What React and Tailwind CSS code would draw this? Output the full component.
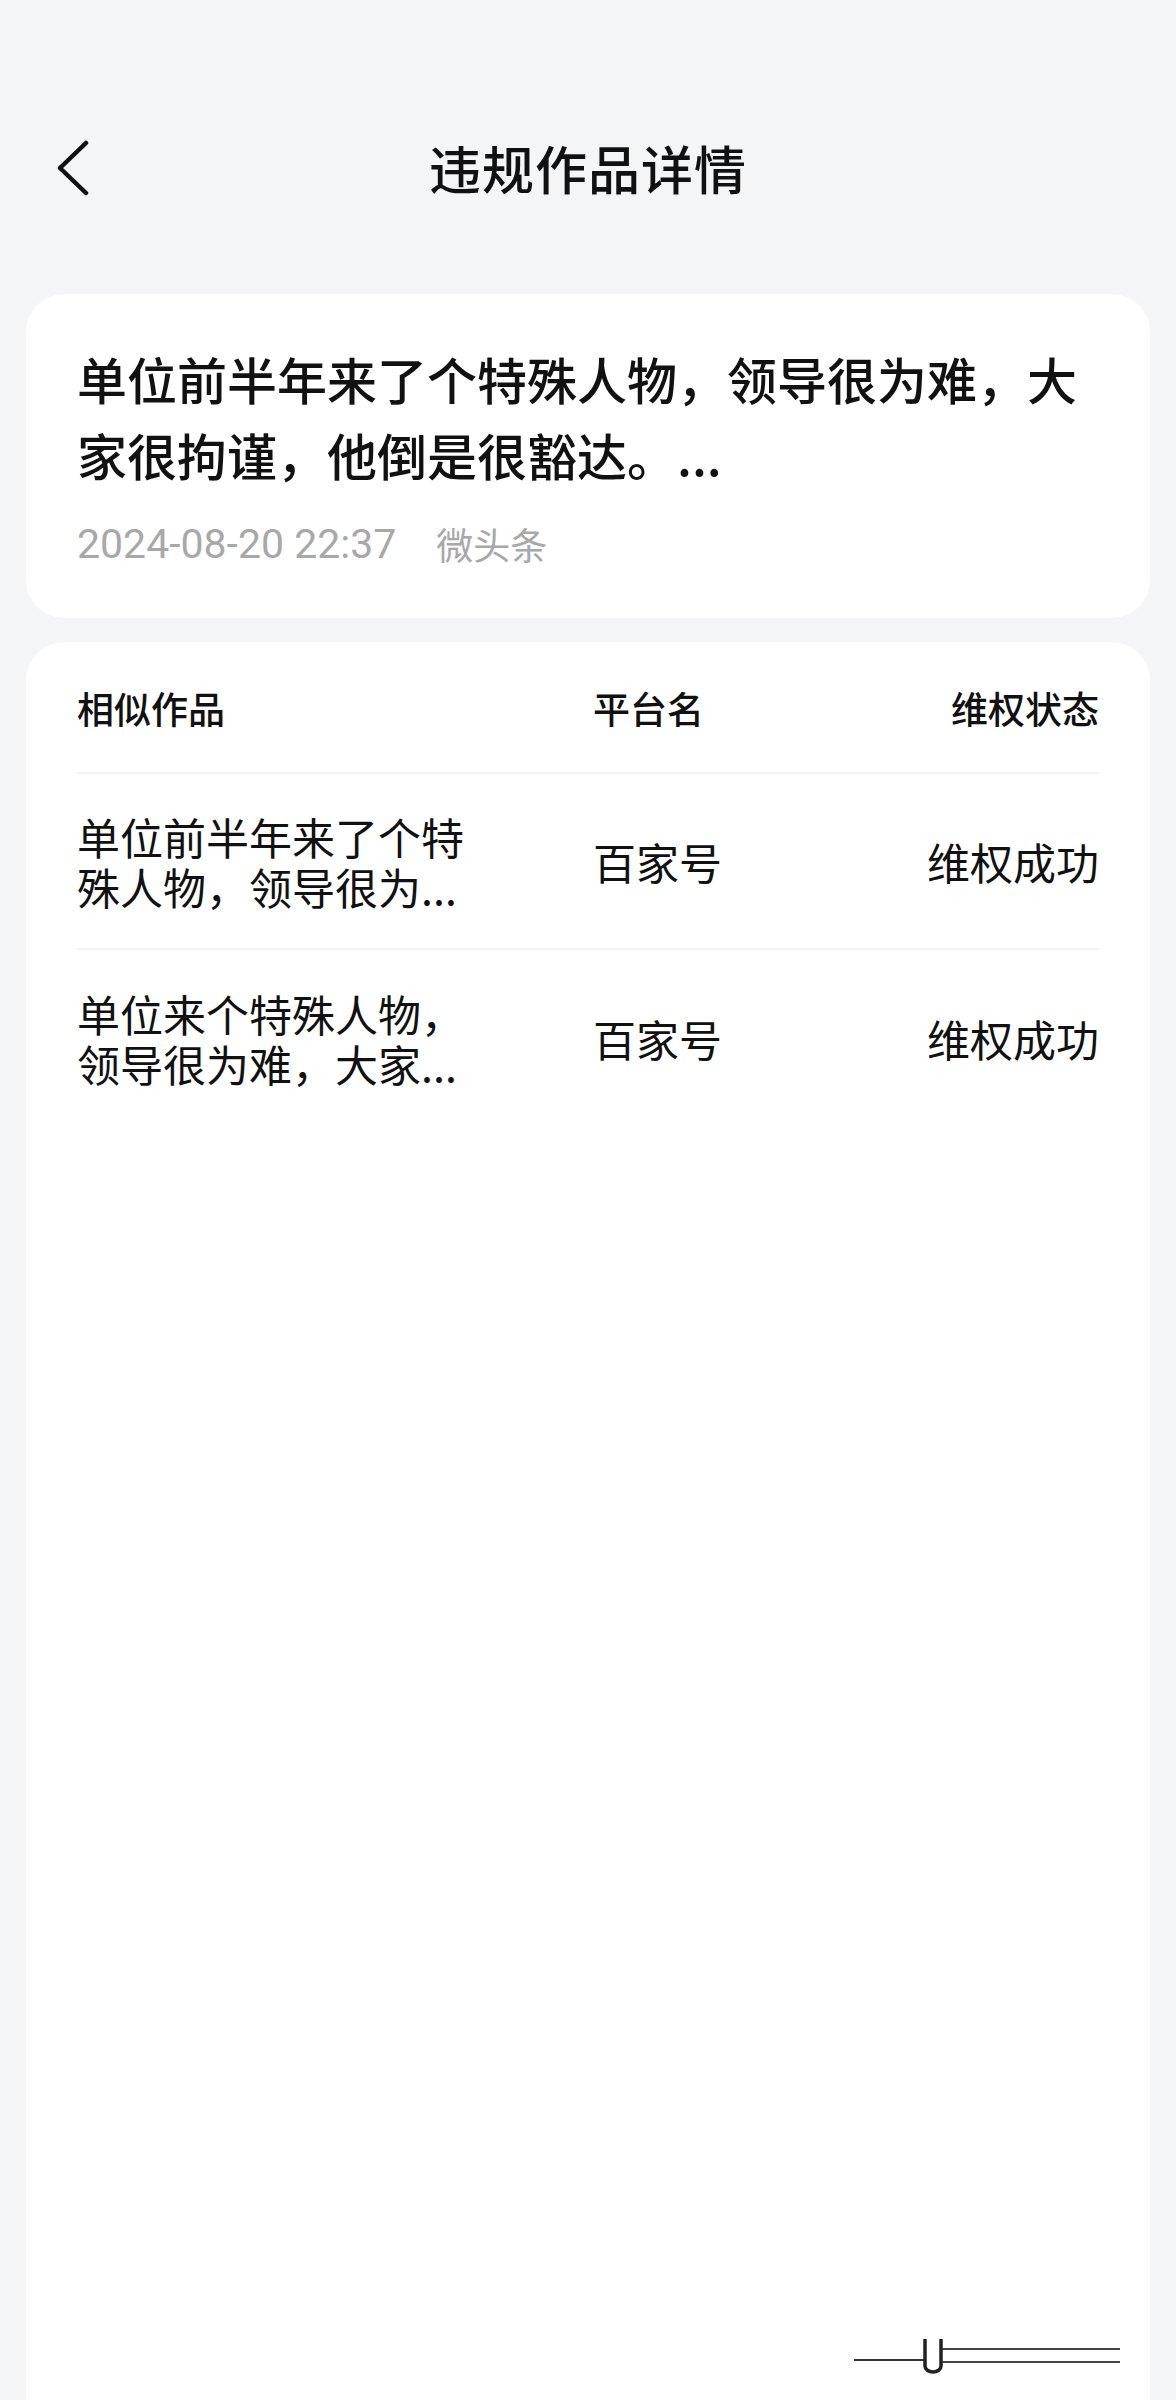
import React from 'react'

const FONT = { fontFamily: '"Noto Sans CJK SC", "Noto Sans", sans-serif' }

const ROWS = [
  { title: '单位前半年来了个特殊人物，领导很为...', platform: '百家号', status: '维权成功' },
  { title: '单位来个特殊人物，领导很为难，大家...', platform: '百家号', status: '维权成功' },
]

function BackIcon() {
  return (
    <svg width="34" height="56" viewBox="0 0 34 56" fill="none">
      <polyline points="30,3 4,28 30,53" stroke="#111" strokeWidth="4.5" strokeLinecap="round" strokeLinejoin="round" />
    </svg>
  )
}

function Watermark() {
  return (
    <svg className="absolute right-[26px] bottom-[24px]" width="272" height="40" viewBox="0 0 272 40" fill="none">
      <line x1="2" y1="24" x2="72" y2="24" stroke="#333" strokeWidth="2" />
      <line x1="90" y1="13" x2="268" y2="13" stroke="#444" strokeWidth="2" />
      <line x1="90" y1="26" x2="268" y2="26" stroke="#444" strokeWidth="2" />
      <path d="M73 3 V30 a8 6 0 0 0 16 0 V3" stroke="#222" strokeWidth="3.5" />
    </svg>
  )
}

export default function App() {
  return (
    <div className="h-[2400px] overflow-hidden bg-[#f4f5f7] flex flex-col text-[#111]" style={FONT}>
      <div className="pt-[130px] grid grid-cols-[1fr_auto_1fr] items-center h-[206px]">
        <div className="pl-[56px] flex items-center">
          <BackIcon />
        </div>
        <h1 className="text-[52px] leading-none font-medium tracking-[1px]">违规作品详情</h1>
        <div />
      </div>

      <div className="mt-[88px] mx-[26px] bg-white rounded-[38px] px-[51px] pt-[46px] pb-[49px]">
        <p className="text-[50px] leading-[76px] font-medium">
          单位前半年来了个特殊人物，领导很为难，大家很拘谨，他倒是很豁达。...
        </p>
        <div className="mt-[27px] flex items-center gap-[40px] leading-[50px] text-[#a8a8a8]">
          <span className="text-[41px]" style={{ fontFamily: 'Roboto, "Noto Sans CJK SC", sans-serif' }}>
            2024-08-20 22:37
          </span>
          <span className="text-[37px]">微头条</span>
        </div>
      </div>

      <div className="relative mt-[24px] mx-[26px] flex-1 bg-white rounded-t-[38px] px-[51px]">
        <div className="grid grid-cols-[516px_1fr_auto] items-center pt-[45px] pb-[43px] text-[37px] leading-[42px] font-medium border-b-2 border-[#f2f2f2]">
          <span>相似作品</span>
          <span>平台名</span>
          <span className="text-right">维权状态</span>
        </div>
        {ROWS.map((row, i) => (
          <div
            key={i}
            className={`grid grid-cols-[516px_1fr_auto] items-center h-[176px] text-[43px] ${
              i === 0 ? 'border-b-2 border-[#f2f2f2]' : ''
            }`}
          >
            <span className="w-[395px] leading-[50px]">{row.title}</span>
            <span>{row.platform}</span>
            <span className="text-right">{row.status}</span>
          </div>
        ))}
        <Watermark />
      </div>
    </div>
  )
}
